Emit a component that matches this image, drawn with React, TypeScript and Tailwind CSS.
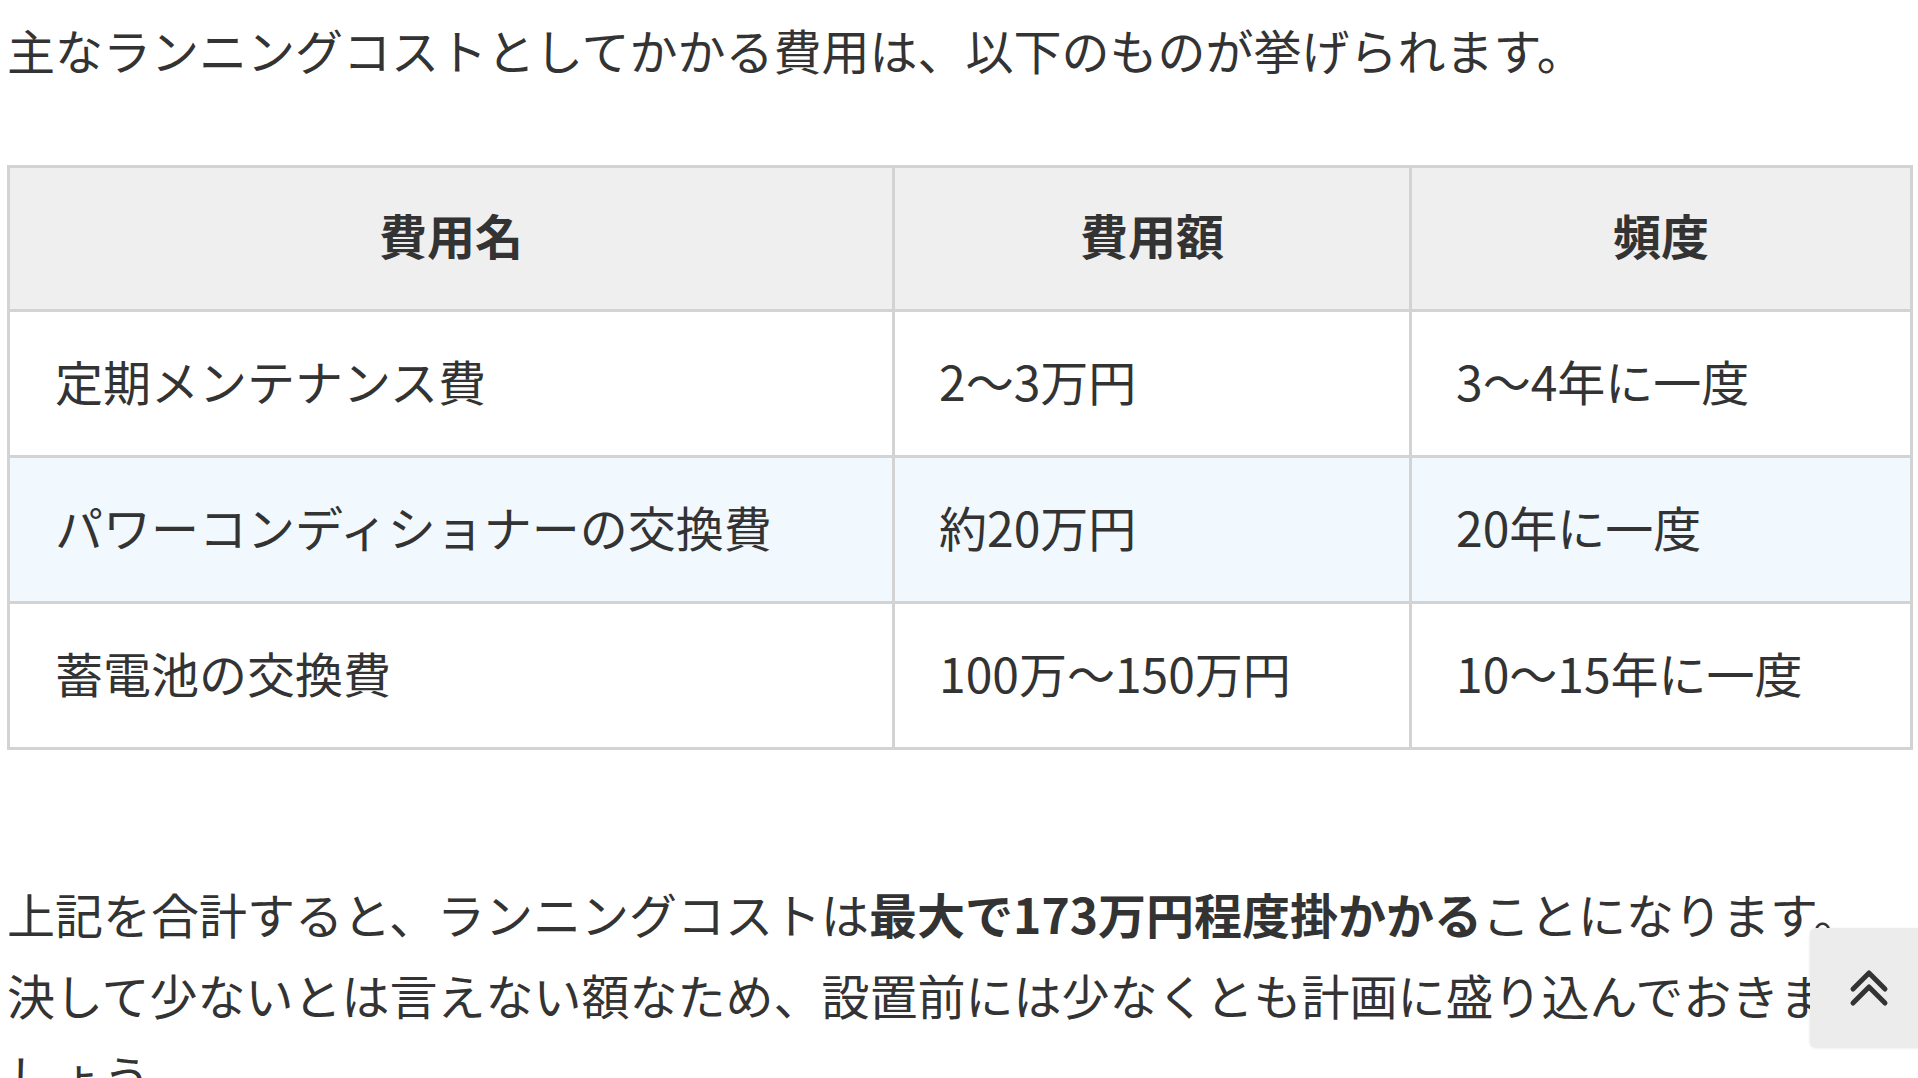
import React from "react";

const rows = [
  { name: "定期メンテナンス費", cost: "2〜3万円", freq: "3〜4年に一度", bg: "bg-white" },
  { name: "パワーコンディショナーの交換費", cost: "約20万円", freq: "20年に一度", bg: "bg-[#f1f8fe]" },
  { name: "蓄電池の交換費", cost: "100万〜150万円", freq: "10〜15年に一度", bg: "bg-white" },
];

export default function App() {
  return (
    <div
      className="relative w-[1918px] h-[1078px] overflow-hidden bg-white text-[#333333]"
      style={{ fontFamily: '"Noto Sans CJK JP", "Noto Sans", sans-serif' }}
    >
      <p className="pl-[7px] pt-[9px] text-[48px] leading-[81px] whitespace-nowrap">
        主なランニングコストとしてかかる費用は、以下のものが挙げられます。
      </p>

      <table className="mt-[75px] ml-[7px] w-[1903px] border-collapse table-fixed text-[48px]">
        <colgroup>
          <col className="w-[885px]" />
          <col className="w-[517px]" />
          <col className="w-[501px]" />
        </colgroup>
        <thead>
          <tr className="h-[144px] bg-[#efefef]">
            <th className="border-[3px] border-[#d3d3d3] pb-[9px] font-bold text-center align-middle">費用名</th>
            <th className="border-[3px] border-[#d3d3d3] pb-[9px] font-bold text-center align-middle">費用額</th>
            <th className="border-[3px] border-[#d3d3d3] pb-[9px] font-bold text-center align-middle">頻度</th>
          </tr>
        </thead>
        <tbody>
          {rows.map((r) => (
            <tr key={r.name} className={`h-[146px] ${r.bg}`}>
              <td className="border-[3px] border-[#d3d3d3] pl-[45px] pb-[8px] align-middle whitespace-nowrap">{r.name}</td>
              <td className="border-[3px] border-[#d3d3d3] pl-[44px] pb-[8px] align-middle whitespace-nowrap">{r.cost}</td>
              <td className="border-[3px] border-[#d3d3d3] pl-[44px] pb-[8px] align-middle whitespace-nowrap">{r.freq}</td>
            </tr>
          ))}
        </tbody>
      </table>

      <p className="mt-[123px] pl-[7px] text-[48px] leading-[81px] whitespace-nowrap">
        上記を合計すると、ランニングコストは
        <strong className="font-bold">最大で173万円程度掛かかる</strong>
        ことになります。
        <br />
        決して少ないとは言えない額なため、設置前には少なくとも計画に盛り込んでおきま
        <br />
        しょう。
      </p>

      <button className="absolute left-[1810px] top-[928px] w-[118px] h-[119px] rounded-md bg-[#ececec] shadow-[0_1px_3px_rgba(0,0,0,0.12)] flex items-center justify-center">
        <svg width="48" height="44" viewBox="0 0 48 44" fill="none" stroke="#333333" strokeWidth="5" strokeLinecap="round" strokeLinejoin="round">
          <polyline points="8,23 24,7 40,23" />
          <polyline points="8,37 24,21 40,37" />
        </svg>
      </button>
    </div>
  );
}
